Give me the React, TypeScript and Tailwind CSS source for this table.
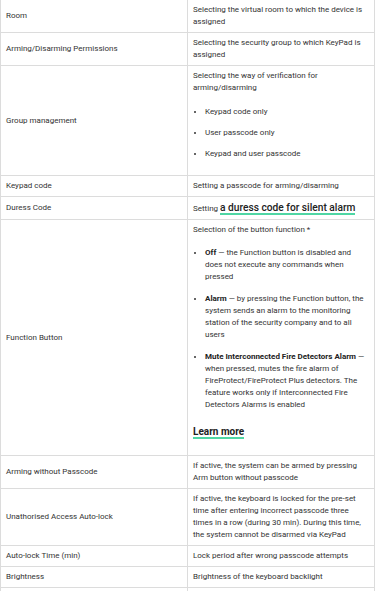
export default function App() {
  const rows: { label: string; content: React.ReactNode }[] = [
    { label: "Room", content: <p>Selecting the virtual room to which the device is assigned</p> },
    {
      label: "Arming/Disarming Permissions",
      content: <p>Selecting the security group to which KeyPad is assigned</p>,
    },
    {
      label: "Group management",
      content: (
        <>
          <p className="mb-[12px]">Selecting the way of verification for arming/disarming</p>
          <ul className="mb-[11px] list-disc space-y-[9px] pl-[12px]">
            <li>Keypad code only</li>
            <li>User passcode only</li>
            <li>Keypad and user passcode</li>
          </ul>
        </>
      ),
    },
    { label: "Keypad code", content: <p>Setting a passcode for arming/disarming</p> },
    {
      label: "Duress Code",
      content: (
        <p>
          Setting{" "}
          <a className="border-b-2 border-[#4fd6a4] text-[10.2px] font-medium leading-[13px] text-[#222]">
            a duress code for silent alarm
          </a>
        </p>
      ),
    },
    {
      label: "Function Button",
      content: (
        <>
          <p className="mb-[11px]">Selection of the button function *</p>
          <ul className="list-disc space-y-[10px] pl-[12px]">
            <li>
              <b className="font-bold text-[#222]">Off</b> — the Function button is disabled and does not
              execute any commands when pressed
            </li>
            <li>
              <b className="font-bold text-[#222]">Alarm</b> — by pressing the Function button, the system
              sends an alarm to the monitoring station of the security company and to all users
            </li>
            <li>
              <b className="font-bold text-[#222]">Mute Interconnected Fire Detectors Alarm</b> — when
              pressed, mutes the fire alarm of FireProtect/FireProtect Plus detectors. The feature works
              only if Interconnected Fire Detectors Alarms is enabled
            </li>
          </ul>
          <p className="mb-[12px] mt-[14px]">
            <a className="border-b-2 border-[#4fd6a4] text-[10px] font-bold leading-[13px] text-[#222]">
              Learn more
            </a>
          </p>
        </>
      ),
    },
    {
      label: "Arming without Passcode",
      content: <p>If active, the system can be armed by pressing Arm button without passcode</p>,
    },
    {
      label: "Unathorised Access Auto-lock",
      content: (
        <p>
          If active, the keyboard is locked for the pre-set time after entering incorrect passcode three
          times in a row (during 30 min). During this time, the system cannot be disarmed via KeyPad
        </p>
      ),
    },
    { label: "Auto-lock Time (min)", content: <p>Lock period after wrong passcode attempts</p> },
    { label: "Brightness", content: <p>Brightness of the keyboard backlight</p> },
    { label: "Buttons Volume", content: <p>Volume of the beeps when pressing the buttons</p> },
  ];

  return (
    <div className="h-[591px] overflow-hidden bg-white font-['Roboto',sans-serif] text-[8px] leading-[12px] text-[#333]">
      <table className="w-[374px] table-fixed border-collapse">
        <colgroup>
          <col className="w-[187px]" />
          <col className="w-[187px]" />
        </colgroup>
        <tbody>
          {rows.map((row, index) => (
            <tr key={row.label} className={index === 0 ? "" : "border-t border-[#dcdcdc]"}>
              <td className="border-x border-[#dcdcdc] px-[5px] py-[4px] align-middle">{row.label}</td>
              <td className="border-x border-[#dcdcdc] px-[5px] py-[4px] align-top">{row.content}</td>
            </tr>
          ))}
        </tbody>
      </table>
    </div>
  );
}
